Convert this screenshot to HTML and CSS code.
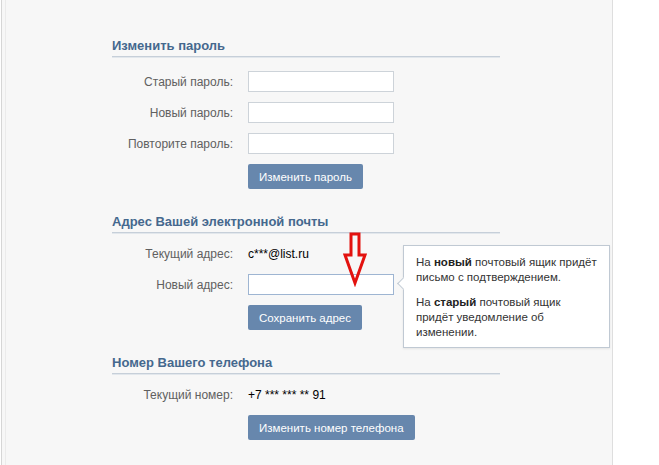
FILE: index.html
```html
<!DOCTYPE html>
<html lang="ru">
<head>
    <meta charset="UTF-8">
    <meta name="viewport" content="width=device-width, initial-scale=1.0">
    <title>Настройки</title>
    <link rel="stylesheet" href="styles.css">
</head>
<body>
    <div class="page">
        <div class="content">
            <!-- Password -->
            <div class="section section-first">
                <h2 class="section-title">Изменить пароль</h2>
                <div class="rows">
                    <div class="row">
                        <label class="row-label" for="oldPass">Старый пароль:</label>
                        <input class="text-input" type="password" id="oldPass">
                    </div>
                    <div class="row">
                        <label class="row-label" for="newPass">Новый пароль:</label>
                        <input class="text-input" type="password" id="newPass">
                    </div>
                    <div class="row">
                        <label class="row-label" for="repeatPass">Повторите пароль:</label>
                        <input class="text-input" type="password" id="repeatPass">
                    </div>
                    <div class="row">
                        <span class="row-label"></span>
                        <button class="button">Изменить пароль</button>
                    </div>
                </div>
            </div>

            <!-- Email -->
            <div class="section">
                <h2 class="section-title">Адрес Вашей электронной почты</h2>
                <div class="rows">
                    <div class="row">
                        <span class="row-label">Текущий адрес:</span>
                        <span class="row-value">c***@list.ru</span>
                    </div>
                    <div class="row">
                        <label class="row-label" for="newEmail">Новый адрес:</label>
                        <div class="input-wrap">
                            <input class="text-input text-input-active" type="text" id="newEmail">
                            <svg class="red-arrow" width="28" height="56" viewBox="0 0 28 56">
                                <polygon points="10,3 18,3 18,24 24,24 14,52 4,24 10,24" fill="none" stroke="#e3120f" stroke-width="3"/>
                            </svg>
                            <div class="hint">
                                <p>На <b>новый</b> почтовый ящик придёт письмо с подтверждением.</p>
                                <p>На <b>старый</b> почтовый ящик придёт уведомление об изменении.</p>
                            </div>
                        </div>
                    </div>
                    <div class="row">
                        <span class="row-label"></span>
                        <button class="button">Сохранить адрес</button>
                    </div>
                </div>
            </div>

            <!-- Phone -->
            <div class="section">
                <h2 class="section-title">Номер Вашего телефона</h2>
                <div class="rows">
                    <div class="row">
                        <span class="row-label">Текущий номер:</span>
                        <span class="row-value">+7 *** *** ** 91</span>
                    </div>
                    <div class="row">
                        <span class="row-label"></span>
                        <button class="button">Изменить номер телефона</button>
                    </div>
                </div>
            </div>
        </div>
    </div>
</body>
</html>
```

FILE: styles.css
```css
body {
    margin: 0;
    background-color: #ffffff;
    font-family: 'Liberation Sans', Arial, sans-serif;
    font-size: 12px;
    color: #000;
}
.page {
    box-sizing: border-box;
    width: 612px;
    min-height: 465px;
    margin-left: 1px;
    padding-left: 3px;
    background-color: #f7f7f7;
    border-left: 1px solid #d6d6d6;
    border-right: 1px solid #dedede;
}
.content {
    box-sizing: border-box;
    min-height: 465px;
    padding: 38px 0 0 106px;
    border-left: 1px solid #ebebeb;
}
.section {
    width: 388px;
    margin-top: 25px;
}
.section-first {
    margin-top: 0;
}
.section-title {
    margin: 0 0 10px;
    padding-bottom: 2px;
    font-size: 13px;
    font-weight: bold;
    line-height: 16px;
    color: #45688e;
    border-bottom: 1px solid #c6cfd9;
    box-shadow: 0 1px 0 #e2e7ec;
}
.section-first .section-title {
    margin-bottom: 14px;
}
.rows {
    display: flex;
    flex-direction: column;
    gap: 10px;
}
.row {
    display: flex;
    align-items: center;
    min-height: 21px;
}
.row-label {
    width: 121px;
    padding-right: 15px;
    text-align: right;
    color: #606060;
}
.row-value {
    color: #000;
}
.text-input {
    box-sizing: border-box;
    width: 146px;
    height: 21px;
    margin: 0;
    border: 1px solid #cdd3d9;
    background: #fff;
    font-family: inherit;
    font-size: 12px;
}
.text-input-active {
    border-color: #9eb5d2;
}
.input-wrap {
    position: relative;
    height: 21px;
}
.button {
    box-sizing: border-box;
    height: 25px;
    padding: 0 11px;
    background-color: #6787ad;
    color: #fff;
    border: none;
    border-radius: 2px;
    font-family: inherit;
    font-size: 11.5px;
    cursor: pointer;
}
.button:hover {
    background-color: #5b7ba1;
}
.red-arrow {
    position: absolute;
    left: 93px;
    top: -43px;
}
.hint {
    position: absolute;
    left: 155px;
    top: -29px;
    box-sizing: border-box;
    width: 207px;
    padding: 9px 10px 7px 12px;
    background: #fff;
    border: 1px solid #c0c9d3;
    box-shadow: 0 1px 2px rgba(0, 0, 0, 0.08);
    color: #333;
    font-size: 11.5px;
    line-height: 15px;
}
.hint::before {
    content: '';
    position: absolute;
    left: -5px;
    top: 33px;
    width: 8px;
    height: 8px;
    background: #fff;
    border-left: 1px solid #c0c9d3;
    border-bottom: 1px solid #c0c9d3;
    transform: rotate(45deg);
}
.hint p {
    margin: 0 0 10px;
}
.hint p:last-child {
    margin-bottom: 0;
}
.hint b {
    color: #222;
}
```
